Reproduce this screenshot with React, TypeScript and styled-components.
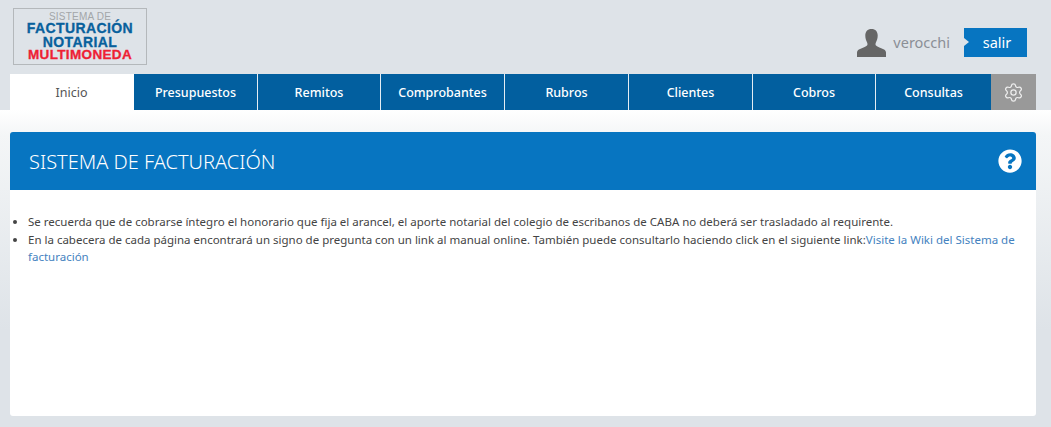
import React from "react";
import styled, { createGlobalStyle } from "styled-components";
import { Settings } from "lucide-react";
import { FaQuestionCircle } from "react-icons/fa";

const GlobalStyle = createGlobalStyle`
  * { box-sizing: border-box; }
  html, body { margin: 0; height: 100%; }
  body {
    font-family: "Noto Sans", "Open Sans", sans-serif;
    background-color: #dee3e8;
  }
`;

const Page = styled.div`
  width: 100%;
  height: 427px;
  overflow: hidden;
  background: linear-gradient(#ffffff 110px, #f4f6f7 135px, #dee3e8 330px);
`;

const Header = styled.header`
  height: 110px;
  padding: 8px 24px 0 10px;
  background-color: #dee3e8;
  display: flex;
  flex-wrap: wrap;
  justify-content: space-between;
  align-content: flex-start;
`;

const Logo = styled.div`
  width: 134px;
  height: 57px;
  margin-left: 3px;
  border: 1px solid #b4b8bb;
  display: flex;
  flex-direction: column;
  align-items: center;
  font-family: "Liberation Sans", Arial, sans-serif;
  font-weight: 700;
  line-height: 12px;
  padding-top: 2px;
`;

const LogoTop = styled.span`
  font-size: 10px;
  line-height: 11px;
  font-weight: 400;
  color: #a3a6a8;
  letter-spacing: 0.2px;
`;

const LogoLine = styled.span<{ $red?: boolean }>`
  font-size: ${(p) => (p.$red ? "13.5px" : "14px")};
  line-height: ${(p) => (p.$red ? "11px" : "13.5px")};
  color: ${(p) => (p.$red ? "#ee2034" : "#08609c")};
  letter-spacing: ${(p) => (p.$red ? "0.35px" : "0.4px")};
  white-space: nowrap;
  -webkit-text-stroke: 0.3px currentColor;
`;

const UserBox = styled.div`
  display: flex;
  align-items: center;
  height: 29px;
  margin-top: 20px;
`;

const UserName = styled.span`
  margin: 0 14px 0 7px;
  font-size: 14.5px;
  color: #8b8f96;
  position: relative;
  top: -1px;
`;

const LogoutButton = styled.button`
  position: relative;
  width: 63px;
  height: 29px;
  border: none;
  padding: 0 0 1px 3px;
  background: #0775c1;
  color: #fff;
  font-family: inherit;
  font-size: 14.5px;
  cursor: pointer;

  &::before {
    content: "";
    position: absolute;
    left: 0;
    top: 10px;
    border-left: 5px solid #dee3e8;
    border-top: 4.5px solid transparent;
    border-bottom: 4.5px solid transparent;
  }
`;

const Nav = styled.nav`
  flex: 0 0 1026px;
  margin-top: 9px;
  height: 36px;
  display: flex;
`;

const Tab = styled.a<{ $active?: boolean; $w: number }>`
  flex: 0 0 ${(p) => p.$w}px;
  display: flex;
  align-items: center;
  justify-content: center;
  font-size: 12.5px;
  font-weight: ${(p) => (p.$active ? 400 : 500)};
  color: ${(p) => (p.$active ? "#555" : "#fff")};
  background: ${(p) => (p.$active ? "#fff" : "#025f9f")};
  border-right: 1px solid ${(p) => (p.$active ? "#fff" : "#e4edf4")};

  &:nth-last-child(2) {
    border-right: none;
  }
`;

const GearTab = styled.a`
  flex: 1;
  display: flex;
  align-items: center;
  justify-content: center;
  background: #999999;
  color: #eee;
`;

const Main = styled.main`
  margin: 22px 15px 0 10px;
`;

const TitleBar = styled.div`
  height: 58px;
  padding: 0 14px 0 19px;
  display: flex;
  align-items: center;
  justify-content: space-between;
  background: #0775c1;
  border-radius: 3px 3px 0 0;
  color: #fff;
`;

const Title = styled.h1`
  margin: 0;
  font-size: 20px;
  font-weight: 300;
  font-family: "Noto Sans", sans-serif;
`;

const Content = styled.section`
  height: 226px;
  background: #fff;
  padding: 23px 18px 0;
  border-radius: 0 0 3px 3px;
`;

const Notes = styled.ul`
  margin: 0;
  padding: 0;
  list-style-position: outside;
  font-size: 11.5px;
  line-height: 17.5px;
  color: #444;
  padding-left: 0;
`;

const Note = styled.li`
  margin-left: 0;
`;

const WikiLink = styled.a`
  color: #4482c0;
  text-decoration: none;
`;

const tabs = [
  { label: "Presupuestos", w: 124 },
  { label: "Remitos", w: 123 },
  { label: "Comprobantes", w: 124 },
  { label: "Rubros", w: 124 },
  { label: "Clientes", w: 124 },
  { label: "Cobros", w: 123 },
  { label: "Consultas", w: 115 },
];

export default function App() {
  return (
    <Page>
      <GlobalStyle />
      <Header>
        <Logo>
          <LogoTop>SISTEMA DE</LogoTop>
          <LogoLine>FACTURACIÓN</LogoLine>
          <LogoLine>NOTARIAL</LogoLine>
          <LogoLine $red>MULTIMONEDA</LogoLine>
        </Logo>
        <UserBox>
          <svg width="29" height="28" viewBox="0 0 29 28" aria-hidden="true">
            <path
              fill="#666"
              d="M14.5 0c4 0 6.2 2.6 6.2 6.6 0 2.8-.8 5-1.7 6.7-.6 1.1-.7 2.6 0 3.3 1 1.1 3.4 2 5.8 2.9 2.6 1 4.2 2 4.2 3.9V28H0v-4.600c0-1.900 1.600-2.900 4.200-3.900 2.400-.9 4.800-1.800 5.800-2.900.7-.7.6-2.200 0-3.300-.9-1.700-1.700-3.900-1.700-6.700C8.300 2.600 10.500 0 14.500 0z"
            />
          </svg>
          <UserName>verocchi</UserName>
          <LogoutButton>salir</LogoutButton>
        </UserBox>
        <Nav>
          <Tab $active $w={124}>Inicio</Tab>
          {tabs.map((t) => (
            <Tab key={t.label} $w={t.w}>{t.label}</Tab>
          ))}
          <GearTab>
            <Settings size={21} strokeWidth={1.4} />
          </GearTab>
        </Nav>
      </Header>
      <Main>
        <TitleBar>
          <Title>SISTEMA DE FACTURACIÓN</Title>
          <FaQuestionCircle size={24} color="#fff" />
        </TitleBar>
        <Content>
          <Notes>
            <Note>
              Se recuerda que de cobrarse íntegro el honorario que fija el arancel, el aporte notarial del colegio de escribanos de CABA no deberá ser trasladado al requirente.
            </Note>
            <Note>
              En la cabecera de cada página encontrará un signo de pregunta con un link al manual online. También puede consultarlo haciendo click en el siguiente link:
              <WikiLink>Visite la Wiki del Sistema de facturación</WikiLink>
            </Note>
          </Notes>
        </Content>
      </Main>
    </Page>
  );
}
